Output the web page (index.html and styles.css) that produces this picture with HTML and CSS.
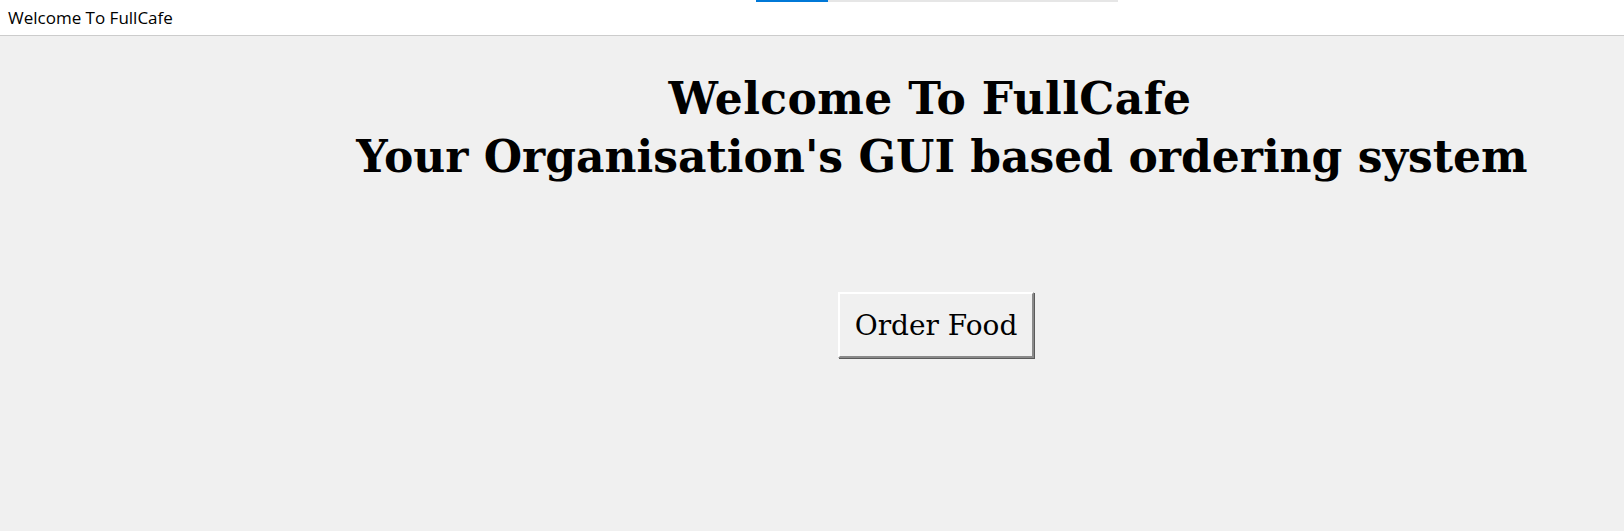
FILE: index.html
```html
<!DOCTYPE html>
<html>
<head>
<meta charset="utf-8">
<title>Welcome To FullCafe</title>
<link rel="stylesheet" href="styles.css">
</head>
<body>
<header class="titlebar">
  <span class="title">Welcome To FullCafe</span>
  <div class="progress"><div class="progress-fill"></div></div>
</header>
<main class="content">
  <h1 class="heading"><span class="line1">Welcome To FullCafe</span><span class="line2">Your Organisation's GUI based ordering system</span></h1>
  <button class="order-btn">Order Food</button>
</main>
</body>
</html>
```
FILE: styles.css
```css
html, body {
  margin: 0;
  padding: 0;
  background: #f0f0f0;
  height: 100%;
}
.titlebar {
  position: relative;
  height: 35px;
  background: #ffffff;
  border-bottom: 1px solid #cccccc;
  display: flex;
  align-items: center;
  padding-left: 8px;
}
.title {
  font-family: "Open Sans", "Noto Sans", sans-serif;
  font-size: 17px;
  color: #000;
}
.progress {
  position: absolute;
  top: 0;
  left: 756px;
  width: 362px;
  height: 2px;
  background: #e6e6e6;
}
.progress-fill {
  width: 72px;
  height: 2px;
  background: #0078d7;
}
.content {
  display: flex;
  flex-direction: column;
  align-items: center;
  padding-left: 248px;
}
.heading {
  margin: 34px 0 0 0;
  font-family: "DejaVu Serif", serif;
  font-weight: bold;
  font-size: 44px;
  line-height: 58px;
  text-align: center;
  color: #000;
}
.line1, .line2 {
  display: block;
}
.line1 {
  padding-right: 12px;
  letter-spacing: 0.4px;
}
.line2 {
  padding-left: 12px;
}
.order-btn {
  margin-top: 106px;
  width: 196px;
  height: 66px;
  background: #f0f0f0;
  border: 2px solid;
  border-color: #ffffff #8a8a8a #8a8a8a #ffffff;
  box-shadow: 1px 1px 0 #5a5a5a;
  font-family: "DejaVu Serif", serif;
  font-size: 28px;
  color: #000;
  padding: 0;
}
```
